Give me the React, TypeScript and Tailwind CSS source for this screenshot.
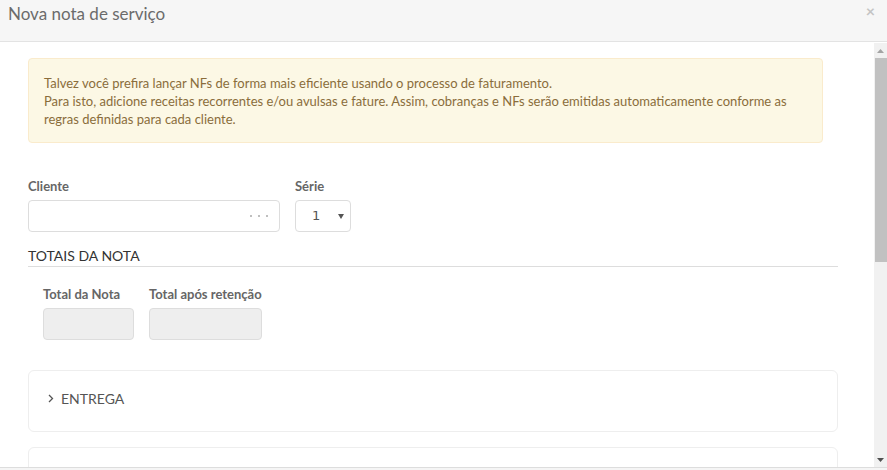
import React from "react";

export default function App() {
  return (
    <div
      className="w-[887px] h-[470px] bg-white overflow-hidden flex flex-col"
      style={{ fontFamily: "Lato, 'Open Sans', sans-serif" }}
    >
      <div className="h-[42px] shrink-0 bg-[#f6f6f6] border-b border-[#e3e3e3] flex items-start justify-between pl-[8px] pr-[12px]">
        <div className="text-[17px] leading-[24px] pt-[2px] text-[#6b6b6b]">Nova nota de serviço</div>
        <div className="text-[16px] leading-[20px] pt-[1px] text-[#c4c4c4] font-bold">×</div>
      </div>
      <div className="flex-1 flex min-h-0 pt-[1px]">
        <div className="flex-1 overflow-hidden pl-[28px] pr-[36px] pt-[15px]">
          <div className="w-[795px] rounded-[4px] border border-[#faebcc] bg-[#fcf8e5] px-[15px] pt-[15px] pb-[14px] text-[13px] leading-[18px] text-[#8a6d3b]">
            Talvez você prefira lançar NFs de forma mais eficiente usando o processo de faturamento.
            <br />
            Para isto, adicione receitas recorrentes e/ou avulsas e fature. Assim, cobranças e NFs serão emitidas automaticamente conforme as regras definidas para cada cliente.
          </div>

          <div className="flex gap-[15px] mt-[35px]">
            <div className="w-[252px]">
              <div className="text-[13px] leading-[16px] font-bold text-[#666]">Cliente</div>
              <div className="mt-[6px] h-[32px] rounded-[4px] border border-[#ddd] flex items-center justify-end pr-[11px] gap-[6px]">
                <span className="w-[2px] h-[2px] rounded-full bg-[#aaa]" />
                <span className="w-[2px] h-[2px] rounded-full bg-[#aaa]" />
                <span className="w-[2px] h-[2px] rounded-full bg-[#aaa]" />
              </div>
            </div>
            <div className="w-[56px]">
              <div className="text-[13px] leading-[16px] font-bold text-[#666]">Série</div>
              <div className="mt-[6px] h-[32px] rounded-[4px] border border-[#ddd] flex items-center pl-[16px] pr-[5px] justify-between">
                <span className="text-[#555]" style={{ fontFamily: "'DejaVu Sans', sans-serif", fontSize: 13 }}>1</span>
                <svg width="8" height="8" viewBox="0 0 8 8">
                  <path d="M1 2 L7 2 L4 7 Z" fill="#555" />
                </svg>
              </div>
            </div>
          </div>

          <div className="mt-[15px] border-b border-[#ddd] pb-[1px] text-[14px] leading-[18px] text-[#333] uppercase">
            Totais da Nota
          </div>

          <div className="flex gap-[15px] mt-[19px] pl-[15px]">
            <div className="w-[91px]">
              <div className="text-[13px] leading-[16px] font-bold text-[#666]">Total da Nota</div>
              <div className="mt-[6px] h-[32px] rounded-[4px] border border-[#ddd] bg-[#eee]" />
            </div>
            <div className="w-[113px]">
              <div className="text-[13px] leading-[16px] font-bold text-[#666] whitespace-nowrap">Total após retenção</div>
              <div className="mt-[6px] h-[32px] rounded-[4px] border border-[#ddd] bg-[#eee]" />
            </div>
          </div>

          <div className="mt-[30px] h-[62px] rounded-[6px] border border-[#eee] flex items-center pl-[19px] pb-[5px]">
            <svg width="6" height="9" viewBox="0 0 6 9" className="mr-[7px]">
              <path d="M1 1 L4.5 4.5 L1 8" stroke="#555" strokeWidth="1.3" fill="none" />
            </svg>
            <span className="text-[14px] text-[#555]">ENTREGA</span>
          </div>
          <div className="mt-[15px] h-[40px] rounded-[6px] border border-[#eee]" />
        </div>
        <div className="w-[13px] shrink-0 bg-[#f1f1f1] flex flex-col items-stretch">
          <div className="h-[15px] flex items-center justify-center">
            <svg width="7" height="4" viewBox="0 0 7 4">
              <path d="M0 4 L3.5 0 L7 4 Z" fill="#a3a3a3" />
            </svg>
          </div>
          <div className="h-[204px] ml-[1px] bg-[#c1c1c1]" />
          <div className="flex-1" />
          <div className="h-[15px] flex items-center justify-center">
            <svg width="7" height="4" viewBox="0 0 7 4">
              <path d="M0 0 L7 0 L3.5 4 Z" fill="#505050" />
            </svg>
          </div>
        </div>
      </div>
      <div className="h-[3px] shrink-0 border-t border-[#ddd] bg-[#f5f5f5]" />
    </div>
  );
}
